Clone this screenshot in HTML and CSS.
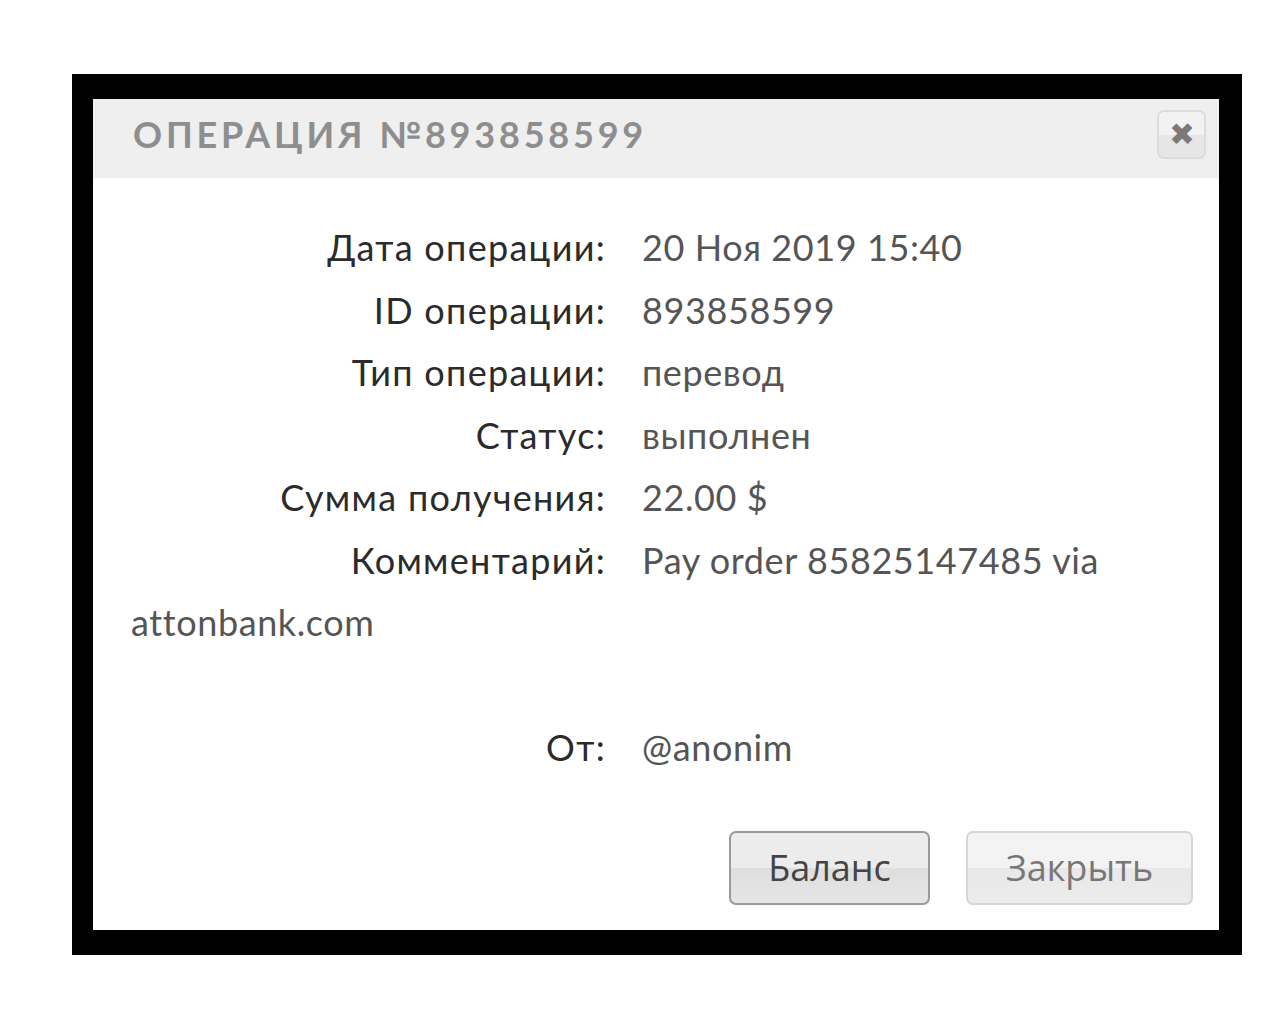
FILE: index.html
```html
<!DOCTYPE html>
<html lang="ru">
  <head>
    <meta charset="UTF-8" />
    <meta name="viewport" content="width=device-width, initial-scale=1.0" />
    <title>Операция №893858599</title>
    <link rel="stylesheet" href="styles.css">
  </head>
  <body>
    <div class="frame">
      <div class="modal">
        <div class="modal-header">
          <h2>Операция №893858599</h2>
          <button class="close" title="Закрыть">&#10006;</button>
        </div>
        <div class="modal-body">
          <div class="row"><span class="label">Дата операции:</span><span class="value">20 Ноя 2019 15:40</span></div>
          <div class="row"><span class="label">ID операции:</span><span class="value">893858599</span></div>
          <div class="row"><span class="label">Тип операции:</span><span class="value">перевод</span></div>
          <div class="row"><span class="label">Статус:</span><span class="value">выполнен</span></div>
          <div class="row"><span class="label">Сумма получения:</span><span class="value">22.00 $</span></div>
          <div class="row"><span class="label">Комментарий:</span><span class="value">Pay order 85825147485 via attonbank.com</span><br><br></div>
          <div class="row"><span class="label">От:</span><span class="value">@anonim</span></div>
        </div>
        <div class="modal-footer">
          <button class="btn btn-main">Баланс</button>
          <button class="btn">Закрыть</button>
        </div>
      </div>
    </div>
  </body>
</html>
```

FILE: styles.css
```css
body {
  margin: 0;
  background-color: #fff;
  font-family: Lato, "Open Sans", sans-serif;
}
.frame {
  width: 1126px;
  margin: 74px 0 0 72px;
  border-style: solid;
  border-color: #000;
  border-width: 25px 23px 25px 21px;
}
.modal {
  background-color: #fff;
}
.modal-header {
  height: 79px;
  background-color: #efefef;
  display: flex;
  align-items: center;
  justify-content: space-between;
  padding: 0 13px 0 40px;
}
.modal-header h2 {
  margin: 0 0 10px;
  font-size: 36px;
  font-weight: bold;
  letter-spacing: 3.8px;
  text-transform: uppercase;
  color: #8e8e8e;
}
.close {
  width: 49px;
  height: 49px;
  margin-top: -8px;
  border: 2px solid #dcdcdc;
  border-radius: 7px;
  background: linear-gradient(#f2f2f2 50%, #e6e6e6 50%);
  color: #7a7a7a;
  font-size: 31px;
  line-height: 1;
  padding: 0;
  cursor: pointer;
}
.modal-body {
  padding: 38px 40px 0 38px;
  font-size: 36px;
  line-height: 62.5px;
}
.label {
  display: inline-block;
  width: 475px;
  text-align: right;
  margin-right: 36px;
  letter-spacing: 1.3px;
  color: #2b2b2b;
}
.value {
  letter-spacing: 0.6px;
  color: #555;
}
.modal-footer {
  display: flex;
  justify-content: flex-end;
  gap: 36px;
  padding: 52px 26px 25px 0;
}
.btn {
  width: 227px;
  height: 74px;
  padding: 0;
  font-family: "Open Sans", sans-serif;
  font-size: 36px;
  color: #777;
  border: 2px solid #d6d6d6;
  border-radius: 7px;
  background: linear-gradient(#f3f3f3 50%, #e8e8e8 50%, #ececec);
  cursor: pointer;
}
.btn-main {
  width: 201px;
  color: #444;
  border-color: #9a9a9a;
  background: linear-gradient(#ececec 50%, #dedede 50%, #e6e6e6);
}
```
